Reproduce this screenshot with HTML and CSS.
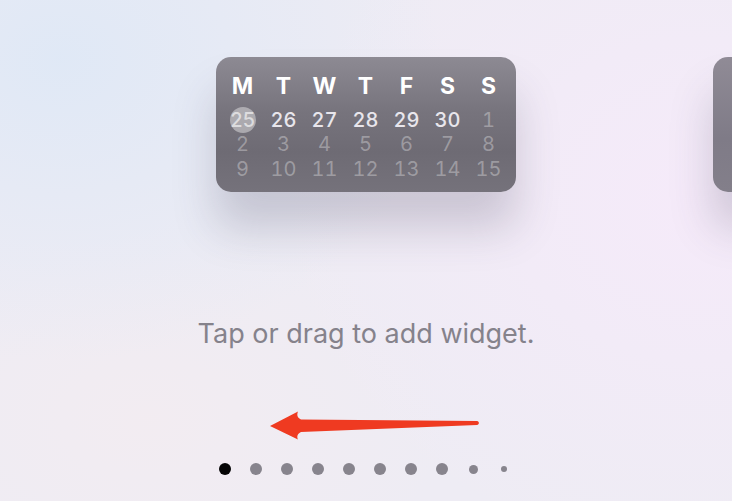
FILE: index.html
```html
<!DOCTYPE html>
<html>
<head>
<meta charset="utf-8">
<link rel="stylesheet" href="styles.css">
</head>
<body>
<div class="screen">
  <div class="widgets">
    <div class="calendar">
      <div class="row head">
        <span>M</span><span>T</span><span>W</span><span>T</span><span>F</span><span>S</span><span>S</span>
      </div>
      <div class="row week">
        <span class="today">25</span><span>26</span><span>27</span><span>28</span><span>29</span><span>30</span><span class="dim">1</span>
      </div>
      <div class="row dim">
        <span>2</span><span>3</span><span>4</span><span>5</span><span>6</span><span>7</span><span>8</span>
      </div>
      <div class="row dim">
        <span>9</span><span>10</span><span>11</span><span>12</span><span>13</span><span>14</span><span>15</span>
      </div>
    </div>
    <div class="calendar next"></div>
  </div>
  <p class="hint">Tap or drag to add widget.</p>
  <div class="arrow-wrap">
    <svg class="arrow" width="212" height="32" viewBox="0 0 212 32">
      <path d="M2,16 L30,1.5 C28.5,5 29.5,8 33,9.5 L209,11 C211.5,11.5 211.5,14.5 209,15 L33,22 C29.5,23.5 28.5,26.5 30,29.5 Z" fill="#ef3a21"/>
    </svg>
  </div>
  <div class="dots">
    <span class="dot active"></span>
    <span class="dot"></span>
    <span class="dot"></span>
    <span class="dot"></span>
    <span class="dot"></span>
    <span class="dot"></span>
    <span class="dot"></span>
    <span class="dot"></span>
    <span class="dot small"></span>
    <span class="dot tiny"></span>
  </div>
</div>
</body>
</html>
```
FILE: styles.css
```css
html, body {
  margin: 0;
  padding: 0;
}
body {
  width: 732px;
  height: 501px;
  overflow: hidden;
  font-family: Inter, "Liberation Sans", sans-serif;
  background-color: #eeecf4;
  background-image:
    radial-gradient(ellipse 380px 300px at 60px 60px, rgba(222, 232, 246, 0.9), rgba(222, 232, 246, 0) 100%),
    radial-gradient(ellipse 420px 360px at 700px 200px, rgba(246, 234, 250, 0.9), rgba(246, 234, 250, 0) 100%),
    radial-gradient(ellipse 300px 200px at 150px 420px, rgba(244, 236, 240, 0.7), rgba(244, 236, 240, 0) 100%);
}
.screen {
  display: flex;
  flex-direction: column;
  width: 732px;
  height: 501px;
  overflow: hidden;
}
.widgets {
  display: flex;
  gap: 197px;
  padding: 57px 0 0 216px;
  height: 135px;
}
.calendar {
  flex: 0 0 300px;
  height: 135px;
  box-sizing: border-box;
  border-radius: 15px;
  background: linear-gradient(180deg, #8d8a93 0%, #77747d 40%, #6e6b74 70%, #75727b 100%);
  box-shadow: 0 36px 44px rgba(70, 62, 90, 0.22);
  padding: 13px 0 0 6px;
  display: flex;
  flex-direction: column;
}
.calendar.next {
  flex: 0 0 60px;
  background: linear-gradient(180deg, #908b96 0%, #7f7b87 60%, #837f8a 100%);
}
.row {
  display: grid;
  grid-template-columns: repeat(7, 41px);
  height: 24.7px;
  align-items: center;
  justify-items: center;
}
.row span {
  display: flex;
  align-items: center;
  justify-content: center;
  font-variant-numeric: tabular-nums;
}
.head {
  height: 31px;
  color: #ffffff;
  font-size: 23px;
  font-weight: 700;
  margin-bottom: 6px;
}
.week {
  color: #e8e6ec;
  font-size: 20px;
  font-weight: 500;
}
.row.dim {
  color: rgba(255, 255, 255, 0.32);
  font-size: 20px;
  font-weight: 400;
}
.week .dim {
  color: rgba(255, 255, 255, 0.32);
  font-weight: 400;
}
.today {
  width: 26px;
  height: 26px;
  border-radius: 50%;
  background: rgba(255, 255, 255, 0.4);
  color: rgba(255, 255, 255, 0.6);
  letter-spacing: -0.5px;
}
.hint {
  margin: 127px 0 0 0;
  height: 30px;
  line-height: 30px;
  text-align: center;
  font-size: 27px;
  font-weight: 400;
  color: #85828b;
}
.arrow-wrap {
  margin-top: 61px;
  padding-left: 268px;
  height: 32px;
}
.arrow {
  display: block;
}
.dots {
  margin-top: 20px;
  display: flex;
  justify-content: center;
  padding-right: 3px;
  height: 14px;
}
.dot {
  flex: 0 0 31px;
  height: 14px;
  display: flex;
  align-items: center;
  justify-content: center;
}
.dot::after {
  content: "";
  display: block;
  width: 12px;
  height: 12px;
  border-radius: 50%;
  background: #87848d;
}
.dot.active::after {
  background: #050505;
}
.dot.small::after {
  width: 9px;
  height: 9px;
}
.dot.tiny::after {
  width: 6px;
  height: 6px;
}
```
